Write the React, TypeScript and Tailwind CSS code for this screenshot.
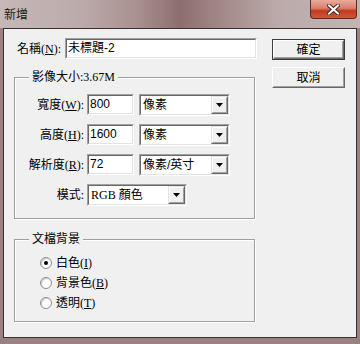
import React from "react";

const LABEL_FONT = "font-['Liberation_Serif','Noto_Sans_CJK_TC',serif]";
const INPUT_FONT = "font-['Liberation_Sans','Noto_Sans_CJK_TC',sans-serif]";

function Sunken({ className, children }: { className?: string; children?: React.ReactNode }) {
  return (
    <div className={`border border-t-[#a0a0a0] border-l-[#a0a0a0] border-b-white border-r-white ${className ?? ""}`}>
      <div className="flex h-full w-full border border-t-[#696969] border-l-[#696969] border-b-[#e3e3e3] border-r-[#e3e3e3] bg-white">
        {children}
      </div>
    </div>
  );
}

function TextBox({ value, width }: { value: string; width: string }) {
  return (
    <Sunken className={`${width} h-[21px]`}>
      <span className={`${INPUT_FONT} pl-[1px] text-[12px] leading-[17px] text-black`}>{value}</span>
    </Sunken>
  );
}

function Arrow() {
  return (
    <div className="h-full w-[17px] border border-t-[#e3e3e3] border-l-[#e3e3e3] border-b-[#696969] border-r-[#696969] bg-[#f0f0f0]">
      <div className="flex h-full w-full items-center justify-center border border-t-white border-l-white border-b-[#a0a0a0] border-r-[#a0a0a0]">
        <svg width="7" height="4" viewBox="0 0 7 4">
          <path d="M0 0h7L3.5 4z" fill="#000" />
        </svg>
      </div>
    </div>
  );
}

function Select({ value, width, serif }: { value: string; width: string; serif?: boolean }) {
  return (
    <Sunken className={`${width} h-[22px]`}>
      <span className={`${serif ? LABEL_FONT : INPUT_FONT} flex-1 pl-[2px] text-[12px] leading-[18px] text-black`}>
        {value}
      </span>
      <Arrow />
    </Sunken>
  );
}

function Mn({ k }: { k: string }) {
  return (
    <>
      (<u className="underline-offset-1">{k}</u>)
    </>
  );
}

function Group({ title, className, children }: { title: string; className?: string; children: React.ReactNode }) {
  return (
    <div
      className={`relative w-[241px] border border-[#a0a0a0] shadow-[inset_1px_1px_0_#fff,1px_1px_0_#fff] ${className ?? ""}`}
    >
      <span className="absolute left-[14px] top-[-8px] bg-[#f0f0f0] px-[3px] text-[12px] leading-[14px] text-black">
        {title}
      </span>
      {children}
    </div>
  );
}

function Row({ label, k, children }: { label: string; k?: string; children: React.ReactNode }) {
  return (
    <div className="flex h-[21px] items-center">
      <div className="w-[70px] pr-[1px] text-right text-[12px] leading-[14px] text-black">
        {label}
        {k && <Mn k={k} />}:
      </div>
      <div className="ml-[2px] flex items-center gap-[5px]">{children}</div>
    </div>
  );
}

function Radio({ label, k, checked }: { label: string; k: string; checked?: boolean }) {
  return (
    <div className="flex h-[20px] items-center">
      <span className="flex h-[12px] w-[12px] items-center justify-center rounded-full border border-[#8d8d8d] bg-white shadow-[inset_1px_1px_1px_#c8c8c8]">
        {checked && <span className="h-[4px] w-[4px] rounded-full bg-black" />}
      </span>
      <span className="ml-[4px] text-[12px] leading-[14px] text-black">
        {label}
        <Mn k={k} />
      </span>
    </div>
  );
}

function PushButton({ label, primary }: { label: string; primary?: boolean }) {
  const inner = (
    <div className="h-full w-full border border-t-white border-l-white border-b-[#696969] border-r-[#696969]">
      <div className="flex h-full w-full items-center justify-center border border-t-[#f0f0f0] border-l-[#f0f0f0] border-b-[#a0a0a0] border-r-[#a0a0a0] bg-[#f0f0f0] text-[12px] text-black">
        {label}
      </div>
    </div>
  );
  return primary ? (
    <div className="h-[21px] w-[73px] border border-[#3c3c3c]">{inner}</div>
  ) : (
    <div className="h-[21px] w-[73px]">{inner}</div>
  );
}

export default function App() {
  return (
    <div className={`flex h-[344px] w-[360px] flex-col bg-[#9c8181] ${LABEL_FONT}`}>
      <div className="flex h-[28px] items-start justify-between bg-[linear-gradient(90deg,#c6b8b8_0%,#bcabab_22%,#aa9090_38%,#8d6e6e_50%,#a48989_62%,#bcabab_78%,#c3b3b3_100%)]">
        <span className="pl-[4px] pt-[6px] font-['Noto_Sans_CJK_TC',sans-serif] text-[12px] leading-[16px] text-[#1a1a1a]">
          新增
        </span>
        <div className="mr-[3px] flex h-[19px] w-[47px] items-center justify-center rounded-b-[4px] border border-t-0 border-[#5b2a22] bg-[linear-gradient(180deg,#e9aa9b_0%,#d9806c_45%,#c3391d_60%,#d0573c_100%)]">
          <svg width="13" height="11" viewBox="0 0 13 11">
            <path d="M2 1.5L11 9.5M11 1.5L2 9.5" stroke="#4a2a26" strokeWidth="4" strokeLinecap="square" />
            <path d="M2 1.5L11 9.5M11 1.5L2 9.5" stroke="#fff" strokeWidth="2" strokeLinecap="square" />
          </svg>
        </div>
      </div>

      <div className="mx-[3px] flex h-[310px] border border-[#3a3030] bg-[#f0f0f0] pl-[10px] pt-[9px]">
        <div className="flex w-[243px] flex-col">
          <div className="flex h-[21px] items-center">
            <div className="w-[51px] pl-[3px] text-[12px] leading-[14px] text-black">
              名稱<Mn k="N" />:
            </div>
            <TextBox value="未標題-2" width="w-[192px]" />
          </div>

          <Group title="影像大小:3.67M" className="mt-[18px] h-[142px]">
            <div className="flex flex-col gap-[9px] pt-[16px]">
              <Row label="寬度" k="W">
                <TextBox value="800" width="w-[47px]" />
                <Select value="像素" width="w-[91px]" />
              </Row>
              <Row label="高度" k="H">
                <TextBox value="1600" width="w-[47px]" />
                <Select value="像素" width="w-[91px]" />
              </Row>
              <Row label="解析度" k="R">
                <TextBox value="72" width="w-[47px]" />
                <Select value="像素/英寸" width="w-[91px]" />
              </Row>
              <Row label="模式">
                <Select value="RGB 顏色" width="w-[100px]" serif />
              </Row>
            </div>
          </Group>

          <Group title="文檔背景" className="mt-[20px] h-[83px]">
            <div className="flex flex-col pl-[25px] pt-[13px]">
              <Radio label="白色" k="I" checked />
              <Radio label="背景色" k="B" />
              <Radio label="透明" k="T" />
            </div>
          </Group>
        </div>

        <div className="ml-[15px] flex flex-col gap-[7px] pt-[1px]">
          <PushButton label="確定" primary />
          <PushButton label="取消" />
        </div>
      </div>
    </div>
  );
}
